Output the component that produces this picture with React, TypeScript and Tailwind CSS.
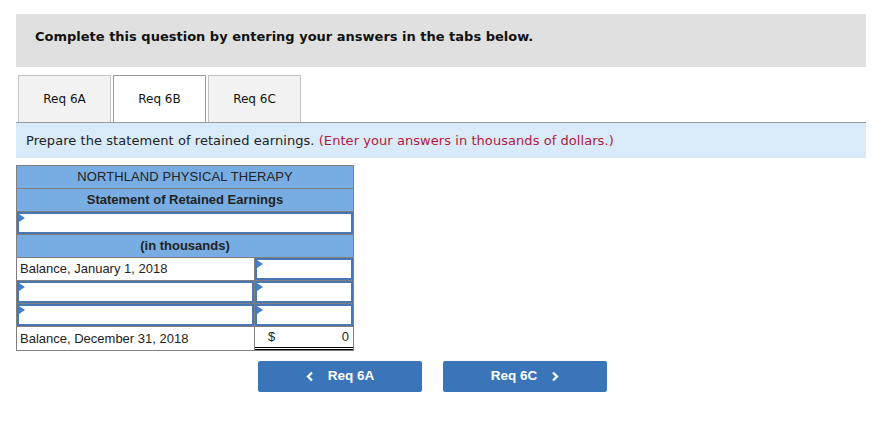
import React from "react";

const Tri = () => (
  <span className="absolute left-0 top-0 w-0 h-0 border-t-[4px] border-b-[4px] border-l-[6px] border-t-transparent border-b-transparent border-l-[#3d7fd0]" />
);

function InputCell({ className = "" }: { className?: string }) {
  return (
    <div className={"relative h-full border-2 border-[#4a77b4] bg-white " + className}>
      <Tri />
    </div>
  );
}

export default function App() {
  const verdana = { fontFamily: '"DejaVu Sans", Verdana, sans-serif' };
  const arial = { fontFamily: '"Liberation Sans", Arial, sans-serif' };
  return (
    <div className="w-[882px] h-[424px] bg-white pt-[14px] pl-[16px]">
      <div className="w-[850px]">
        <div className="h-[53px] bg-[#e0e0e0] pl-[19px] pt-[14px]" style={verdana}>
          <p className="text-[13px] font-bold text-[#111] leading-[18px]">
            Complete this question by entering your answers in the tabs below.
          </p>
        </div>

        <div className="mt-[8px] flex items-end gap-[2px] pl-[2px] h-[48px] border-b border-[#999]" style={verdana}>
          <div className="w-[93px] h-[47px] border border-b-0 border-[#c4c4c4] bg-[#f2f2f2] flex items-center justify-center text-[12px] text-[#111]">
            Req 6A
          </div>
          <div className="w-[93px] h-[47px] border border-b-0 border-[#9a9a9a] bg-white flex items-center justify-center text-[12px] text-[#111]">
            Req 6B
          </div>
          <div className="w-[93px] h-[47px] border border-b-0 border-[#c4c4c4] bg-[#f2f2f2] flex items-center justify-center text-[12px] text-[#111]">
            Req 6C
          </div>
        </div>

        <div className="h-[35px] bg-[#d9ebf9] pl-[10px] pt-[1px] flex items-center text-[13px] text-[#222]" style={verdana}>
          <span className="tracking-[0.06px]">
            Prepare the statement of retained earnings.{" "}
            <span className="text-[#b3183f]">(Enter your answers in thousands of dollars.)</span>
          </span>
        </div>

        <div className="mt-[7px] w-[338px] border border-[#7f7f7f] text-[13px] text-[#222]" style={arial}>
          <div className="h-[23px] bg-[#78ade3] border-b border-[#7f7f7f] flex items-center justify-center tracking-[0.1px]">
            NORTHLAND PHYSICAL THERAPY
          </div>
          <div className="h-[23px] bg-[#78ade3] border-b border-[#7f7f7f] flex items-center justify-center font-bold">
            Statement of Retained Earnings
          </div>
          <div className="h-[23px] border-b border-[#7f7f7f]">
            <InputCell />
          </div>
          <div className="h-[23px] bg-[#78ade3] border-b border-[#7f7f7f] flex items-center justify-center font-bold">
            (in thousands)
          </div>
          <div className="h-[23px] border-b border-[#7f7f7f] flex">
            <div className="w-[238px] border-r border-[#7f7f7f] flex items-center pl-[3px]">Balance, January 1, 2018</div>
            <div className="flex-1"><InputCell /></div>
          </div>
          <div className="h-[23px] border-b border-[#7f7f7f] flex">
            <div className="w-[238px] border-r border-[#7f7f7f]"><InputCell /></div>
            <div className="flex-1"><InputCell /></div>
          </div>
          <div className="h-[23px] border-b border-[#7f7f7f] flex">
            <div className="w-[238px] border-r border-[#7f7f7f]"><InputCell /></div>
            <div className="flex-1"><InputCell /></div>
          </div>
          <div className="h-[23px] flex">
            <div className="w-[238px] border-r border-[#7f7f7f] flex items-center pl-[3px]">Balance, December 31, 2018</div>
            <div className="flex-1 flex items-center justify-between pl-[13px] pr-[4px] border-b-[3px] border-double border-black">
              <span>$</span>
              <span>0</span>
            </div>
          </div>
        </div>

        <div className="mt-[10px] ml-[242px] flex gap-[21px]" style={arial}>
          <button className="w-[164px] h-[31px] bg-[#3a75b9] rounded-[2px] flex items-center justify-center gap-[14px] text-white text-[13.5px] font-bold">
            <svg width="8" height="11" viewBox="0 0 8 11"><path d="M6 1.5 L2 5.5 L6 9.5" stroke="white" strokeWidth="2.2" fill="none" /></svg>
            <span>Req 6A</span>
          </button>
          <button className="w-[164px] h-[31px] bg-[#3a75b9] rounded-[2px] flex items-center justify-center gap-[14px] text-white text-[13.5px] font-bold">
            <span>Req 6C</span>
            <svg width="8" height="11" viewBox="0 0 8 11"><path d="M2 1.5 L6 5.5 L2 9.5" stroke="white" strokeWidth="2.2" fill="none" /></svg>
          </button>
        </div>
      </div>
    </div>
  );
}
